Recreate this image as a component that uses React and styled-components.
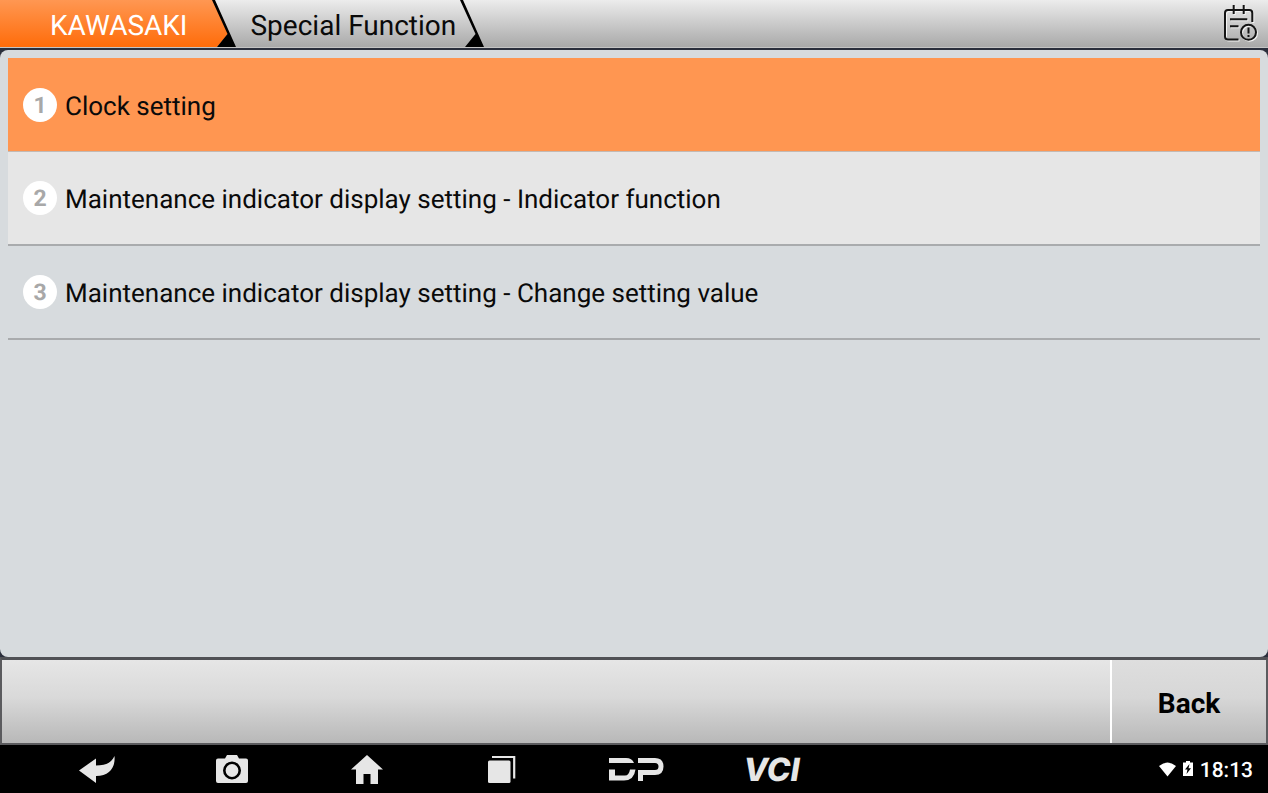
import React from 'react';
import styled, { createGlobalStyle, css } from 'styled-components';

const GlobalStyle = createGlobalStyle`
  * {
    box-sizing: border-box;
  }
  body {
    margin: 0;
    background: #2b2f3c;
    color: #0a0a0a;
    font-family: Roboto, 'Liberation Sans', sans-serif;
    text-rendering: geometricPrecision;
  }
  button {
    border: 0;
    margin: 0;
    padding: 0;
    background: none;
    color: inherit;
    font: inherit;
    text-rendering: inherit;
    cursor: pointer;
  }
  svg {
    display: block;
  }
`;

const Screen = styled.div`
  display: flex;
  flex-direction: column;
  min-height: 100vh;
`;

const TopBar = styled.header`
  display: flex;
  align-items: center;
  justify-content: space-between;
  height: 48px;
  padding-right: 10px;
  border-bottom: 1px solid #c4c4c4;
  background: linear-gradient(#ececec, #a9a9a9);
`;

const Crumbs = styled.nav`
  display: flex;
  height: 47px;
`;

const Crumb = styled.button`
  display: flex;
  align-items: center;
  height: 47px;
  padding-top: 4px;
  padding-left: 14px;
  font-size: 28px;
  line-height: 32px;
  ${({ $active }) => $active && css`
    padding-left: 50px;
    padding-right: 25px;
    background: linear-gradient(#ff9752, #ff6c0a);
    color: #fff;
  `}
  ${({ $active }) => !$active && css`
    padding-right: 4px;
  `}
`;

const IconButton = styled.button`
  display: flex;
`;

const Panel = styled.main`
  flex: 1;
  margin-top: 2px;
  padding: 8px;
  border-radius: 8px;
  background: #d7dbde;
`;

const List = styled.ol`
  margin: 0;
  padding: 0;
  list-style: none;
`;

const Row = styled.button`
  display: flex;
  align-items: center;
  gap: 8px;
  width: 100%;
  height: 94px;
  padding: 0 15px;
  border-bottom: 2px solid #a9abad;
  font-size: 26px;
  line-height: 32px;
  text-align: left;
  ${({ $tone }) => $tone === 'selected' && css`
    background: #ff9651;
    border-bottom: 1px solid #c3b9b3;
  `}
  ${({ $tone }) => $tone === 'light' && css`
    background: #e6e6e6;
  `}
`;

const Label = styled.span`
  padding-top: 4px;
`;

const Bullet = styled.span`
  display: flex;
  align-items: center;
  justify-content: center;
  width: 34px;
  height: 34px;
  padding-top: 2px;
  border-radius: 50%;
  background: #fff;
  color: #a8a8a8;
  font-size: 23px;
  font-weight: 700;
`;

const ActionBar = styled.footer`
  display: flex;
  justify-content: flex-end;
  height: 88px;
  border: 2px solid #5b5b5e;
  border-top: 3px solid #505155;
  background: linear-gradient(#e6e6e6, #d9d9d9 45%, #b8b8b8);
`;

const ActionButton = styled.button`
  width: 156px;
  padding-top: 4px;
  border-left: 2px solid #fff;
  background: linear-gradient(#dedede, #d7d7d7 45%, #b9b9b9);
  color: #000;
  font-size: 28px;
  font-weight: 700;
`;

const SystemBar = styled.nav`
  display: flex;
  align-items: center;
  height: 48px;
  padding: 0 15px 0 29px;
  background: #000;
  color: #e6e6e6;
`;

const SystemButton = styled.button`
  display: flex;
  align-items: center;
  justify-content: center;
  width: 135px;
  height: 48px;
`;

const Brand = styled.span`
  padding-top: 2px;
  font-family: Inter, Roboto, sans-serif;
  font-size: 32px;
  font-style: italic;
  font-weight: 800;
  line-height: 46px;
`;

const Status = styled.div`
  display: flex;
  align-items: center;
  gap: 7px;
  margin-left: auto;
  color: #fff;
  font-size: 21px;
  font-weight: 500;
  line-height: 26px;
`;

const Time = styled.span`
  padding-top: 4px;
`;

const Divider = ({ active }) => (
  <svg width="24" height="47" viewBox="0 0 24 47" aria-hidden="true">
    {active && (
      <>
        <defs>
          <linearGradient id="orange" x1="0" y1="0" x2="0" y2="47" gradientUnits="userSpaceOnUse">
            <stop offset="0" stopColor="#ff9752" />
            <stop offset="1" stopColor="#ff6c0a" />
          </linearGradient>
        </defs>
        <path d="M0 0H2L16 34 5 47H0Z" fill="url(#orange)" />
      </>
    )}
    <path d="M0 0H3L24 47H5L15.500 34Z" fill="#000" />
  </svg>
);

const notePath = 'M28.300 17V8Q28.300 5 25.300 5H4Q1 5 1 8V31.500Q1 34.500 4 34.500H14.500M9.700 0V9M19.700 0V9M6 14.300H23.300M6 21.300H14.500';

const NoteIcon = () => (
  <svg width="34" height="37" viewBox="0 0 34 37" fill="none" aria-hidden="true">
    <g stroke="#f4f4f4" strokeWidth="2" transform="translate(1 1)">
      <path d={notePath} />
      <circle cx="24.500" cy="27.300" r="7.500" />
    </g>
    <g stroke="#141414" strokeWidth="2">
      <path d={notePath} />
      <circle cx="24.500" cy="27.300" r="7.500" />
      <path d="M24.500 22.500V28.500M24.500 30V32" />
    </g>
  </svg>
);

const ReturnIcon = () => (
  <svg width="37" height="28" viewBox="0 0 37 28" fill="currentColor" aria-hidden="true">
    <path d="M1 15.500 18 3.500V10.500C26 10.500 33 9 36.500 1C37.500 12 32 21 18 21V28Z" />
  </svg>
);

const CameraIcon = () => (
  <svg width="32" height="28" viewBox="0 0 32 28" aria-hidden="true">
    <path d="M2 3.500H9L11 0H21L23 3.500H30Q32 3.500 32 5.500V26Q32 28 30 28H2Q0 28 0 26V5.500Q0 3.500 2 3.500Z" fill="currentColor" />
    <circle cx="16" cy="15.500" r="7.700" fill="none" stroke="#000" strokeWidth="2.600" />
  </svg>
);

const HomeIcon = () => (
  <svg width="32" height="30" viewBox="0 0 32 30" fill="currentColor" aria-hidden="true">
    <path d="M16 1 32 15.500H27V30H19.500V20H12.500V30H5V15.500H0Z" />
  </svg>
);

const WindowsIcon = () => (
  <svg width="28" height="28" viewBox="0 0 28 28" aria-hidden="true">
    <rect y="5.500" width="22.500" height="22.500" rx="1.500" fill="currentColor" />
    <path d="M4 2H26.200V23.500" fill="none" stroke="currentColor" strokeWidth="2.200" />
  </svg>
);

// diagnostics brand mark: split bar on the left, hooked bar on the right
const DiagMark = () => (
  <svg width="56" height="24" viewBox="0 0 56 24" fill="none" stroke="currentColor" strokeWidth="5" role="img" aria-label="DP">
    <path d="M0 1H17Q23 1 25 6H0ZM0 12.500H6V18.500H16Q20 18.500 21 12.500H26.500Q25 23.500 15 23.500H0Z" fill="currentColor" stroke="none" />
    <path d="M29 3.500H46Q52 3.500 52 9.500T46 15.500H31.500V24" />
  </svg>
);

const WifiIcon = () => (
  <svg width="17" height="15" viewBox="0 0 17 15" fill="currentColor" aria-hidden="true">
    <path d="M0 4Q8.500-3 17 4L8.500 14.500Z" />
  </svg>
);

const BatteryIcon = () => (
  <svg width="10" height="17" viewBox="0 0 10 17" aria-hidden="true">
    <path d="M0 1.500H3V0H7V1.500H10V15H0Z" fill="currentColor" />
    <path d="M6.500 3 2 8.500H4.500L3.500 13 8 7.200H5.500Z" fill="#000" />
  </svg>
);

const rows = [
  { label: 'Clock setting', tone: 'selected' },
  { label: 'Maintenance indicator display setting - Indicator function', tone: 'light' },
  { label: 'Maintenance indicator display setting - Change setting value' },
];

export default () => (
  <>
    <GlobalStyle />
    <Screen>
      <TopBar>
        <Crumbs>
          <Crumb $active>KAWASAKI</Crumb>
          <Divider active />
          <Crumb>Special Function</Crumb>
          <Divider />
        </Crumbs>
        <IconButton aria-label="Feedback">
          <NoteIcon />
        </IconButton>
      </TopBar>
      <Panel>
        <List>
          {rows.map(({ label, tone }, i) => (
            <li key={label}>
              <Row $tone={tone}>
                <Bullet>{i + 1}</Bullet>
                <Label>{label}</Label>
              </Row>
            </li>
          ))}
        </List>
      </Panel>
      <ActionBar>
        <ActionButton>Back</ActionButton>
      </ActionBar>
      <SystemBar>
        <SystemButton aria-label="Return"><ReturnIcon /></SystemButton>
        <SystemButton aria-label="Screenshot"><CameraIcon /></SystemButton>
        <SystemButton aria-label="Home"><HomeIcon /></SystemButton>
        <SystemButton aria-label="Recent apps"><WindowsIcon /></SystemButton>
        <SystemButton><DiagMark /></SystemButton>
        <SystemButton><Brand>VCI</Brand></SystemButton>
        <Status>
          <WifiIcon />
          <BatteryIcon />
          <Time>18:13</Time>
        </Status>
      </SystemBar>
    </Screen>
  </>
);
